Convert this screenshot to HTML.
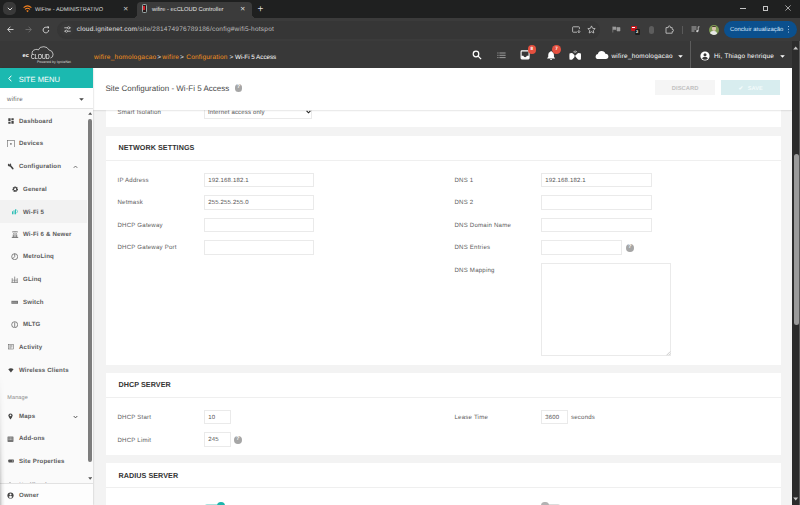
<!DOCTYPE html>
<html><head><meta charset="utf-8"><title>wifire - ecCLOUD Controller</title>
<style>
*{box-sizing:border-box;margin:0;padding:0}
html,body{width:800px;height:505px;overflow:hidden;background:#f4f4f4;font-family:"Liberation Sans",sans-serif;letter-spacing:0.01px;text-rendering:geometricPrecision}
.a{position:absolute;white-space:nowrap}
#tabs{left:0;top:0;width:800px;height:18px;background:#1f2020}
#tool{left:0;top:18px;width:800px;height:23px;background:#3b3b3b}
#apph{left:0;top:41px;width:792px;height:27px;background:#383838}
#sb{left:792px;top:41px;width:8px;height:464px;background:#2c2c2c}
#sbt{left:793.5px;top:154px;width:5px;height:171px;background:#9b9b9b;border-radius:2.5px}
.t{font-size:5.6px;color:#d8d8d8;line-height:8px}
.card{background:#fff}
.lbl{font-size:6.1px;letter-spacing:0.2px;color:#5e5e5e;line-height:8px}
.inp{background:#fff;border:1px solid #eaeaea;height:14.6px;font-size:6px;letter-spacing:0.17px;color:#555;line-height:12.8px;padding-left:2.9px;padding-top:1.1px}
.hd{font-size:7.2px;font-weight:bold;color:#333;line-height:10px;letter-spacing:0.05px}
.mi{font-size:6.1px;letter-spacing:0.17px;font-weight:bold;color:#5a5a5a;line-height:8px;left:19px}
.mi2{left:23px}
.bc{top:53.9px;font-size:6.5px;line-height:8px;color:#f7931e}
.hl{left:105.5px;width:675px;height:0.8px;background:#efefef}
</style></head><body>
<!-- browser chrome -->
<div class="a" id="tabs"></div>
<div class="a" style="left:2.6px;top:2px;width:13px;height:13px;border-radius:5px;background:#393939"></div>
<svg class="a" style="left:6.5px;top:7px" width="6" height="4" viewBox="0 0 6 4"><path d="M0.8 0.8 L3 3 L5.2 0.8" fill="none" stroke="#e0e0e0" stroke-width="1"/></svg>
<svg class="a" style="left:22.5px;top:4.5px" width="9" height="8" viewBox="0 0 9 8"><path d="M0.6 2.6 Q4.5 -0.8 8.4 2.6" fill="none" stroke="#f58220" stroke-width="1.1"/><path d="M2 4.3 Q4.5 2.2 7 4.3" fill="none" stroke="#f58220" stroke-width="1.1"/><path d="M3.2 5.8 L4.5 7.3 L5.8 5.8 Q4.5 4.9 3.2 5.8Z" fill="#f58220"/></svg>
<div class="a t" style="left:35px;top:6.1px">WiFire - ADMINISTRATIVO</div>
<div class="a t" style="left:122.9px;top:5.8px;font-size:6.5px;color:#ccc">✕</div>
<div class="a" style="left:137px;top:2px;width:114.5px;height:17px;background:#3b3b3b;border-radius:4px 4px 0 0"></div>
<div class="a" style="left:133px;top:14px;width:4px;height:4px;background:radial-gradient(circle at 0 0,rgba(59,59,59,0) 3.8px,#3b3b3b 4.2px)"></div><div class="a" style="left:251.5px;top:14px;width:4px;height:4px;background:radial-gradient(circle at 100% 0,rgba(59,59,59,0) 3.8px,#3b3b3b 4.2px)"></div>
<div class="a" style="left:141.5px;top:4.2px;width:5.6px;height:8.6px;border:0.8px solid #9aa;border-radius:1.3px;background:#2a1a1a"></div>
<div class="a" style="left:143.1px;top:5.8px;width:2.4px;height:4.6px;background:#d0202a"></div>
<div class="a t" style="left:152px;top:6.1px;color:#e6e6e6;font-size:5.75px">wifire - ecCLOUD Controller</div>
<div class="a t" style="left:240px;top:5.8px;font-size:6.5px;color:#ddd">✕</div>
<div class="a t" style="left:257.4px;top:4.4px;font-size:10px;color:#ddd;line-height:12px">+</div>
<div class="a" style="left:740.2px;top:8.2px;width:5.5px;height:0.7px;background:#c4c4c4"></div>
<div class="a" style="left:762.6px;top:5.8px;width:5.4px;height:5.4px;border:0.7px solid #c4c4c4"></div>
<svg class="a" style="left:784.5px;top:5.3px" width="6" height="6" viewBox="0 0 6 6"><path d="M0.4 0.4 L5.6 5.6 M5.6 0.4 L0.4 5.6" stroke="#d0d0d0" stroke-width="0.75"/></svg>

<div class="a" id="tool"></div>
<svg class="a" style="left:6.5px;top:26px" width="7" height="7" viewBox="0 0 7 7"><path d="M6.5 3.5 H0.8 M3.4 0.7 L0.7 3.5 L3.4 6.3" fill="none" stroke="#ddd" stroke-width="0.9"/></svg>
<svg class="a" style="left:24.5px;top:26px" width="7" height="7" viewBox="0 0 7 7"><path d="M0.5 3.5 H6.2 M3.6 0.7 L6.3 3.5 L3.6 6.3" fill="none" stroke="#6e6e6e" stroke-width="0.9"/></svg>
<svg class="a" style="left:42px;top:25.5px" width="8" height="8" viewBox="0 0 8 8"><path d="M6.7 4 A2.8 2.8 0 1 1 5.6 1.8" fill="none" stroke="#ddd" stroke-width="0.9"/><path d="M4.6 0.4 H7 V2.8 Z" fill="#ddd"/></svg>
<div class="a" style="left:57px;top:21px;width:543px;height:17.5px;border-radius:9px;background:#363636"></div>
<div class="a" style="left:60px;top:22.8px;width:13.5px;height:13.5px;border-radius:7px;background:#393939"></div>
<svg class="a" style="left:63.5px;top:26.3px" width="7" height="7" viewBox="0 0 7 7"><path d="M0.3 1.8 H6.7 M0.3 5.2 H6.7" stroke="#ddd" stroke-width="0.8"/><circle cx="4.6" cy="1.8" r="1.1" fill="#353535" stroke="#ddd" stroke-width="0.7"/><circle cx="2.4" cy="5.2" r="1.1" fill="#353535" stroke="#ddd" stroke-width="0.7"/></svg>
<div class="a t" style="left:76.8px;top:26px;font-size:6.5px;letter-spacing:0.23px;color:#bcbcbc"><span style="color:#e6e6e6">cloud.ignitenet.com</span>/site/281474976789186/config#wifi5-hotspot</div>
<!-- right toolbar icons -->
<svg class="a" style="left:571.5px;top:25.5px" width="9" height="8" viewBox="0 0 9 8"><path d="M5 6.2 H1.2 Q0.6 6.2 0.6 5.6 V1.4 Q0.6 0.8 1.2 0.8 H6.8 Q7.4 0.8 7.4 1.4 V3" fill="none" stroke="#cfcfcf" stroke-width="0.8"/><path d="M6.9 3.8 V6.6 M5.6 5.4 L6.9 6.7 L8.2 5.4" fill="none" stroke="#cfcfcf" stroke-width="0.8"/></svg>
<svg class="a" style="left:587px;top:25.3px" width="9" height="9" viewBox="0 0 9 9"><path d="M4.5 0.9 L5.6 3.3 L8.2 3.6 L6.3 5.4 L6.8 8 L4.5 6.7 L2.2 8 L2.7 5.4 L0.8 3.6 L3.4 3.3 Z" fill="none" stroke="#cfcfcf" stroke-width="0.8"/></svg>
<svg class="a" style="left:612px;top:26px" width="9" height="7" viewBox="0 0 9 7"><path d="M0.8 0.5 V6.5 M0.8 1 H4 V3.6 H0.8 M5 1.5 H8 V5 H5 Z" fill="#9a9a9a" stroke="#9a9a9a" stroke-width="0.6"/></svg>
<div class="a" style="left:630.5px;top:25.6px;width:6px;height:5px;background:#c4161c;border-radius:1px"></div>
<div class="a" style="left:632px;top:27px;width:3px;height:1px;background:#fff"></div>
<div class="a" style="left:634.5px;top:29.3px;width:5.4px;height:5.4px;background:#1d1d1d;border-radius:1.2px;color:#fff;font-size:4px;line-height:5.4px;text-align:center;font-weight:bold">2</div>
<div class="a" style="left:648.5px;top:25.5px;width:5px;height:8px;border-radius:2.5px;background:#5d5d5d"></div>
<svg class="a" style="left:665px;top:25px" width="9" height="9" viewBox="0 0 9 9"><path d="M1 2.6 H3.2 Q3 0.9 4.3 0.9 Q5.6 0.9 5.4 2.6 H7.2 V4.4 Q8.6 4.2 8.6 5.4 Q8.6 6.6 7.2 6.4 V8.2 H1 Z" fill="none" stroke="#cfcfcf" stroke-width="0.8"/></svg>
<div class="a" style="left:682px;top:25.5px;width:0.7px;height:8.5px;background:#5a5a5a"></div>
<svg class="a" style="left:690.5px;top:26px" width="9" height="7" viewBox="0 0 9 7"><path d="M0.5 1 H5.5 M0.5 3 H5.5 M0.5 5 H3.5" stroke="#cfcfcf" stroke-width="0.8"/><path d="M7.2 0.8 V5 M7.2 0.8 H8.6" stroke="#cfcfcf" stroke-width="0.8" fill="none"/><circle cx="6.3" cy="5.2" r="1.1" fill="#cfcfcf"/></svg>
<div class="a" style="left:708.7px;top:24.7px;width:10.2px;height:10.2px;border-radius:5.1px;overflow:hidden;background:#7c9a52"><div class="a" style="left:3.1px;top:1.6px;width:4px;height:4.6px;border-radius:2px;background:#d8c3ae"></div><div class="a" style="left:3.1px;top:1.2px;width:4px;height:1.6px;border-radius:2px 2px 0 0;background:#4a3a30"></div><div class="a" style="left:1.6px;top:6.4px;width:7px;height:5px;border-radius:3px 3px 0 0;background:#e8e8e8"></div></div>
<div class="a" style="left:724.4px;top:21.2px;width:72.5px;height:17px;border-radius:8.5px;background:#0b508e"></div>
<div class="a t" style="left:730px;top:25.8px;font-size:5.9px;color:#d3e6fc">Concluir atualização</div>
<div class="a" style="left:787.7px;top:25.8px;width:1.4px;height:1.4px;background:#d3e6fc;border-radius:1px;box-shadow:0 2.8px 0 #d3e6fc,0 5.6px 0 #d3e6fc"></div>

<!-- app header -->
<div class="a" id="apph"></div>
<svg class="a" style="left:20px;top:41px" width="40" height="22" viewBox="0 0 40 22"><path d="M12.2 13.2 Q11.6 9.2 15.6 8.5 Q17.2 8 18.3 9 Q19.4 5.4 23.9 5.7 Q27.6 5.9 28.8 8.8 Q32.6 9.6 33.1 13.1 Q33.3 16.4 30.4 17.1" fill="none" stroke="#f4f4f4" stroke-width="0.7"/></svg>
<div class="a" style="left:22.4px;top:52.4px;font-size:5.6px;letter-spacing:0.35px;line-height:8px;font-weight:bold;color:#fff">ec</div>
<div class="a" style="left:30.9px;top:52.2px;font-size:7.3px;line-height:9px;color:#fff;transform:scaleX(0.73);transform-origin:0 0">CLOUD</div>
<div class="a" style="left:36.9px;top:59.5px;font-size:3.55px;line-height:5px;color:#d8d8d8">Powered by IgniteNet</div>
<div class="a bc" style="left:94px;letter-spacing:0.26px">wifire_homologacao</div>
<div class="a bc" style="left:157.3px;color:#e8e8e8">&gt;</div>
<div class="a bc" style="left:162.3px;letter-spacing:0.3px">wifire</div>
<div class="a bc" style="left:180px;color:#e8e8e8">&gt;</div>
<div class="a bc" style="left:186.3px;letter-spacing:0.2px">Configuration</div>
<div class="a bc" style="left:229.5px;color:#e8e8e8">&gt;</div>
<div class="a bc" style="left:235px;color:#fff;font-size:6.3px;letter-spacing:-0.03px">Wi-Fi 5 Access</div>
<!-- header right icons -->
<svg class="a" style="left:472px;top:50.3px" width="10" height="10" viewBox="0 0 9 9"><circle cx="3.6" cy="3.6" r="2.5" fill="none" stroke="#fff" stroke-width="1.1"/><path d="M5.5 5.5 L8.2 8.2" stroke="#fff" stroke-width="1.2"/></svg>
<svg class="a" style="left:497px;top:51.5px" width="9" height="7" viewBox="0 0 9 7"><path d="M0.3 1 H1.5 M0.3 3.3 H1.5 M0.3 5.6 H1.5" stroke="#9c9c9c" stroke-width="1"/><path d="M2.4 1 H8.6 M2.4 3.3 H8.6 M2.4 5.6 H8.6" stroke="#9c9c9c" stroke-width="1"/></svg>
<svg class="a" style="left:520.4px;top:50.2px" width="10.4" height="10" viewBox="0 0 10 10"><rect x="0.9" y="0.9" width="8" height="8" rx="0.8" fill="none" stroke="#fff" stroke-width="1.1"/><path d="M1 5.8 H3.2 Q3.4 7.2 4.9 7.2 Q6.4 7.2 6.6 5.8 H8.8 V8.8 H1 Z" fill="#fff"/></svg>
<div class="a" style="left:527.5px;top:45px;width:8.8px;height:8.8px;border-radius:4.4px;background:#e5503f;color:#fff;font-size:4.6px;line-height:8.8px;text-align:center;font-weight:bold">8</div>
<svg class="a" style="left:545.6px;top:50px" width="10.2" height="10.4" viewBox="0 0 10 10"><path d="M5 0.8 Q5.7 0.8 5.7 1.5 Q7.8 2.1 7.8 4.6 V6.8 L8.8 7.8 V8.2 H1.2 V7.8 L2.2 6.8 V4.6 Q2.2 2.1 4.3 1.5 Q4.3 0.8 5 0.8 Z" fill="#fff"/><path d="M4 8.7 H6 Q6 9.7 5 9.7 Q4 9.7 4 8.7Z" fill="#fff"/></svg>
<div class="a" style="left:552.1px;top:45px;width:8.8px;height:8.8px;border-radius:4.4px;background:#e5503f;color:#fff;font-size:4.6px;line-height:8.8px;text-align:center;font-weight:bold">7</div>
<svg class="a" style="left:569.2px;top:49.6px" width="12.4" height="10.6" viewBox="0 0 12.4 10.6"><path d="M4.4 1.8 Q6.2 0.2 8 1.8" fill="none" stroke="#ddd" stroke-width="0.7"/><path d="M5.2 2.8 Q6.2 2 7.2 2.8" fill="none" stroke="#ddd" stroke-width="0.6"/><path d="M0.5 3.6 Q0.2 6.5 0.5 9.6 Q2.5 10 3.6 9.2 L5.4 7.2 V5 L3.6 3.2 Q2 2.8 0.5 3.6Z M11.9 3.6 Q12.2 6.5 11.9 9.6 Q9.9 10 8.8 9.2 L7 7.2 V5 L8.8 3.2 Q10.4 2.8 11.9 3.6Z" fill="#fff"/><rect x="5.4" y="5.2" width="1.6" height="1.6" fill="#bbb"/></svg>
<svg class="a" style="left:594.5px;top:50.2px" width="14" height="10" viewBox="0 0 14 10"><path d="M3.4 9 Q0.6 9 0.6 6.4 Q0.6 4.2 2.9 4 Q3.4 1 6.6 1 Q9.6 1 10.4 3.8 Q13.4 4 13.4 6.6 Q13.4 9 10.8 9 Z" fill="#fff"/></svg>
<div class="a" style="left:611.5px;top:52.8px;font-size:6.4px;letter-spacing:0.25px;line-height:8px;color:#fff">wifire_homologacao</div>
<svg class="a" style="left:677.5px;top:55.3px" width="5" height="3" viewBox="0 0 5 3"><path d="M0.2 0.2 H4.8 L2.5 2.8 Z" fill="#fff"/></svg>
<div class="a" style="left:689.6px;top:41px;width:0.8px;height:27px;background:#5c5c5c"></div>
<svg class="a" style="left:699.5px;top:50.5px" width="10" height="10" viewBox="0 0 10 10"><circle cx="5" cy="5" r="4.6" fill="#fff"/><circle cx="5" cy="3.7" r="1.5" fill="#383838"/><path d="M2.1 7.4 Q2.4 5.8 5 5.8 Q7.6 5.8 7.9 7.4 Q6.8 8.8 5 8.8 Q3.2 8.8 2.1 7.4Z" fill="#383838"/></svg>
<div class="a" style="left:714px;top:52.8px;font-size:6.4px;letter-spacing:0.23px;line-height:8px;color:#fff">Hi, Thiago henrique</div>
<svg class="a" style="left:779.5px;top:55.3px" width="5" height="3" viewBox="0 0 5 3"><path d="M0.2 0.2 H4.8 L2.5 2.8 Z" fill="#fff"/></svg>

<!-- page scrollbar -->
<div class="a" id="sb"></div><div class="a" style="left:799.2px;top:41px;width:0.8px;height:464px;background:#5a5a5a"></div><div class="a" id="sbt"></div>
<svg class="a" style="left:793.3px;top:45.5px" width="5.4" height="4" viewBox="0 0 5.4 4"><path d="M0.2 3.6 L2.7 0.4 L5.2 3.6Z" fill="#c8c8c8"/></svg>
<svg class="a" style="left:793.3px;top:497px" width="5.4" height="4" viewBox="0 0 5.4 4"><path d="M0.2 0.4 L2.7 3.6 L5.2 0.4Z" fill="#c8c8c8"/></svg>

<!-- content -->
<div class="a" style="left:93px;top:68px;width:699px;height:437px;background:#f3f3f3"></div>
<!-- card1 -->
<div class="a card" style="left:105.5px;top:100px;width:675px;height:26.6px"></div>
<div class="a lbl" style="left:117.5px;top:109.2px">Smart Isolation</div>
<div class="a inp" style="left:204.3px;top:104.7px;width:108px;padding-left:2.6px;line-height:13.4px">Internet access only</div>
<svg class="a" style="left:305.5px;top:110.3px" width="5" height="4" viewBox="0 0 5 4"><path d="M0.6 0.8 L2.5 2.8 L4.4 0.8" fill="none" stroke="#222" stroke-width="1.1"/></svg>
<!-- content header -->
<div class="a" style="left:93px;top:68px;width:699px;height:41.6px;background:#fff;box-shadow:0 0.5px 1.2px rgba(0,0,0,0.10)"></div>
<div class="a" style="left:105.4px;top:82.6px;font-size:8px;line-height:11px;color:#4a4a4a">Site Configuration - Wi-Fi 5 Access</div>
<div class="a" style="left:234.7px;top:84.1px;width:7.8px;height:7.8px;border-radius:50%;background:#a6a6a6;color:#fff;font-size:5.6px;font-weight:bold;line-height:7.8px;text-align:center">?</div>
<div class="a" style="left:655.2px;top:80.1px;width:59.8px;height:15.4px;background:#f5f5f5;color:#c2c2c2;font-size:5.8px;font-weight:bold;line-height:15.4px;padding-top:2.4px;text-align:center">DISCARD</div>
<div class="a" style="left:721.1px;top:80.1px;width:59px;height:15.4px;background:#d8edef;color:#f4fbfb;font-size:5.6px;font-weight:bold;line-height:15.4px;padding-top:2.4px;text-align:center">✔&nbsp;&nbsp;&nbsp;SAVE</div>

<!-- card2 -->
<div class="a card" style="left:105.5px;top:135.5px;width:675px;height:229px"></div>
<div class="a hd" style="left:118.5px;top:143.3px">NETWORK SETTINGS</div>
<div class="a hl" style="top:159.8px"></div>
<div class="a lbl" style="left:117.5px;top:176.9px">IP Address</div>
<div class="a lbl" style="left:117.5px;top:199.4px">Netmask</div>
<div class="a lbl" style="left:117.5px;top:221.9px">DHCP Gateway</div>
<div class="a lbl" style="left:117.5px;top:244.4px">DHCP Gateway Port</div>
<div class="a inp" style="left:204.3px;top:172.7px;width:110px">192.168.182.1</div>
<div class="a inp" style="left:204.3px;top:195.2px;width:110px">255.255.255.0</div>
<div class="a inp" style="left:204.3px;top:217.7px;width:110px"></div>
<div class="a inp" style="left:204.3px;top:240.2px;width:110px"></div>
<div class="a lbl" style="left:454.5px;top:176.9px">DNS 1</div>
<div class="a lbl" style="left:454.5px;top:199.4px">DNS 2</div>
<div class="a lbl" style="left:454.5px;top:221.9px">DNS Domain Name</div>
<div class="a lbl" style="left:454.5px;top:244.4px">DNS Entries</div>
<div class="a lbl" style="left:454.5px;top:266.9px">DNS Mapping</div>
<div class="a inp" style="left:541.3px;top:172.7px;width:110.3px">192.168.182.1</div>
<div class="a inp" style="left:541.3px;top:195.2px;width:110.3px"></div>
<div class="a inp" style="left:541.3px;top:217.7px;width:110.3px"></div>
<div class="a inp" style="left:541.3px;top:240.2px;width:80.3px"></div>
<div class="a" style="left:625.9px;top:244.3px;width:7.8px;height:7.8px;border-radius:50%;background:#a6a6a6;color:#fff;font-size:5.6px;font-weight:bold;line-height:7.8px;text-align:center">?</div>
<div class="a inp" style="left:541.3px;top:262.7px;width:130.2px;height:93.6px"></div>
<svg class="a" style="left:666px;top:351px" width="4.5" height="4.5" viewBox="0 0 4.5 4.5"><path d="M4.2 0.6 L0.6 4.2 M4.2 2.6 L2.6 4.2" stroke="#999" stroke-width="0.5"/></svg>

<!-- card3 -->
<div class="a card" style="left:105.5px;top:372.7px;width:675px;height:82px"></div>
<div class="a hd" style="left:118.5px;top:380px">DHCP SERVER</div>
<div class="a hl" style="top:396.6px"></div>
<div class="a lbl" style="left:117.5px;top:414.1px">DHCP Start</div>
<div class="a lbl" style="left:117.5px;top:436.7px">DHCP Limit</div>
<div class="a inp" style="left:204.3px;top:409.7px;width:26.4px">10</div>
<div class="a inp" style="left:204.3px;top:432.3px;width:26.4px">245</div>
<div class="a" style="left:233.8px;top:436.1px;width:7.8px;height:7.8px;border-radius:50%;background:#a6a6a6;color:#fff;font-size:5.6px;font-weight:bold;line-height:7.8px;text-align:center">?</div>
<div class="a lbl" style="left:454.5px;top:414.1px">Lease Time</div>
<div class="a inp" style="left:541.3px;top:409.7px;width:26.4px">3600</div>
<div class="a lbl" style="left:571px;top:414.1px">seconds</div>

<!-- card4 -->
<div class="a card" style="left:105.5px;top:462.7px;width:675px;height:50px"></div>
<div class="a hd" style="left:118.5px;top:471.1px">RADIUS SERVER</div>
<div class="a hl" style="top:486.6px"></div>
<div class="a" style="left:205px;top:503.8px;width:14px;height:4px;border-radius:2px;background:#a9e3df"></div>
<div class="a" style="left:216.5px;top:501.5px;width:8px;height:8px;border-radius:4px;background:#1cb5ac"></div>
<div class="a" style="left:546px;top:504px;width:14px;height:4px;border-radius:2px;background:#dcdcdc"></div>
<div class="a" style="left:541.4px;top:501.5px;width:7.6px;height:7.6px;border-radius:4px;background:#b2b2b2"></div>

<!-- sidebar -->
<div class="a" style="left:0;top:68px;width:93.3px;height:437px;background:#fafafa;box-shadow:0.6px 0 1.6px rgba(0,0,0,0.16)"></div>
<div class="a" style="left:0;top:68px;width:93.3px;height:20.3px;background:#1bb9b0"></div>
<svg class="a" style="left:8.3px;top:75px" width="4" height="7" viewBox="0 0 4 7"><path d="M3.4 0.7 L0.8 3.5 L3.4 6.3" fill="none" stroke="#fff" stroke-width="1"/></svg>
<div class="a" style="left:18.7px;top:73.6px;font-size:7.57px;line-height:11px;color:#fff">SITE MENU</div>
<div class="a" style="left:0;top:88.3px;width:93.3px;height:21px;background:#fff;border-bottom:0.7px solid #e4e4e4"></div>
<div class="a" style="left:7px;top:96.2px;font-size:6.1px;letter-spacing:0.3px;line-height:8px;color:#666">wifire</div>
<svg class="a" style="left:79.3px;top:98px" width="5" height="3" viewBox="0 0 5 3"><path d="M0.2 0.2 H4.8 L2.5 2.8 Z" fill="#444"/></svg>
<!-- sidebar scrollbar -->
<svg class="a" style="left:87.8px;top:112.4px" width="4.4" height="3" viewBox="0 0 4.4 3"><path d="M0.2 2.8 L2.2 0.3 L4.2 2.8Z" fill="#555"/></svg>
<div class="a" style="left:88.2px;top:118.6px;width:3.8px;height:343.4px;border-radius:1.9px;background:#7d7d7d"></div>
<svg class="a" style="left:87.8px;top:477.4px" width="4.4" height="3" viewBox="0 0 4.4 3"><path d="M0.2 0.2 L2.2 2.7 L4.2 0.2Z" fill="#555"/></svg>
<!-- active item -->
<div class="a" style="left:0;top:199.8px;width:87.4px;height:22.8px;background:#f2f2f2"></div>
<!-- items -->
<div class="a mi" style="top:117.7px">Dashboard</div>
<div class="a mi" style="top:140.3px">Devices</div>
<div class="a mi" style="top:162.9px">Configuration</div>
<div class="a mi mi2" style="top:185.5px">General</div>
<div class="a mi mi2" style="top:208.7px">Wi-Fi 5</div>
<div class="a mi mi2" style="top:230.7px">Wi-Fi 6 &amp; Newer</div>
<div class="a mi mi2" style="top:253.3px">MetroLinq</div>
<div class="a mi mi2" style="top:275.9px">GLinq</div>
<div class="a mi mi2" style="top:298.5px">Switch</div>
<div class="a mi mi2" style="top:321.1px">MLTG</div>
<div class="a mi" style="top:343.7px">Activity</div>
<div class="a mi" style="top:366.9px">Wireless Clients</div>
<div class="a" style="left:7.2px;top:394.9px;font-size:5.5px;letter-spacing:0.15px;line-height:7px;color:#8a8a8a">Manage</div>
<div class="a mi" style="top:412.6px">Maps</div>
<div class="a mi" style="top:435.2px">Add-ons</div>
<div class="a mi" style="top:457.8px">Site Properties</div>
<div class="a mi" style="top:482.2px">Notifications</div>
<!-- icons -->
<svg class="a" style="left:8px;top:118.2px" width="6" height="6" viewBox="0 0 6 6"><path d="M0.3 0.3 H2.6 V3.3 H0.3Z M3.4 0.3 H5.7 V2 H3.4Z M0.3 4.1 H2.6 V5.7 H0.3Z M3.4 2.8 H5.7 V5.7 H3.4Z" fill="#444"/></svg>
<svg class="a" style="left:6.8px;top:139.7px" width="7.8" height="7.8" viewBox="0 0 7.8 7.8"><rect x="0.5" y="0.5" width="6.8" height="6.8" fill="none" stroke="#666" stroke-width="0.6"/><rect x="3.2" y="3.2" width="1.4" height="1.4" fill="#555"/></svg>
<svg class="a" style="left:7px;top:163px" width="7" height="7" viewBox="0 0 7 7"><path d="M0.9 2.4 Q0.4 0.8 2 0.4 L2.3 1.5 L3.2 1.3 L3 0.3 Q4.6 0.6 4.2 2.4 L6.6 5.2 Q6.7 6.4 5.5 6.4 L3 3.4 Q1.6 3.8 0.9 2.4Z" fill="#444"/></svg>
<svg class="a" style="left:73px;top:164.8px" width="5" height="4" viewBox="0 0 5 4"><path d="M0.7 2.9 L2.5 1 L4.3 2.9" fill="none" stroke="#555" stroke-width="0.8"/></svg>
<svg class="a" style="left:11.6px;top:185.8px" width="6.4" height="6.4" viewBox="0 0 6.4 6.4"><circle cx="3.2" cy="3.2" r="2" fill="none" stroke="#444" stroke-width="1.6" stroke-dasharray="1.1 0.47"/><circle cx="3.2" cy="3.2" r="1.7" fill="none" stroke="#444" stroke-width="1"/></svg>
<svg class="a" style="left:10.6px;top:208.3px" width="8" height="7" viewBox="0 0 8 7"><path d="M1.5 6.3 V3.3 M3 6.3 V2.3 M4.5 6.3 V1.3" stroke="#1bb9b0" stroke-width="0.9"/><path d="M5.6 1.6 Q7.4 3.4 5.6 5.2" fill="none" stroke="#1bb9b0" stroke-width="0.6"/></svg>
<svg class="a" style="left:10.6px;top:230.9px" width="8" height="7" viewBox="0 0 8 7"><path d="M1 1 Q4 -0.4 7 1 M2 2.4 Q4 1.5 6 2.4" fill="none" stroke="#555" stroke-width="0.6"/><path d="M2.3 6.3 V3.4 M4 6.3 V3.1 M5.7 6.3 V3.4 M0.8 6.4 H7.2" stroke="#555" stroke-width="0.8"/></svg>
<svg class="a" style="left:11.0px;top:253px" width="7.4" height="7.4" viewBox="0 0 7.4 7.4"><circle cx="3.7" cy="3.7" r="3" fill="none" stroke="#555" stroke-width="0.7"/><path d="M3.7 0.7 V3.7 L1.6 5.8" fill="none" stroke="#555" stroke-width="0.7"/></svg>
<svg class="a" style="left:11.0px;top:275.9px" width="7.4" height="7" viewBox="0 0 7.4 7"><path d="M1.2 6.4 V2.2 M3.7 6.4 V0.6 M6.2 6.4 V2.2 M0.4 6.4 H7" stroke="#666" stroke-width="0.7"/><path d="M1.2 4.2 H6.2" stroke="#666" stroke-width="0.5"/></svg>
<svg class="a" style="left:11.0px;top:299.6px" width="7.4" height="5" viewBox="0 0 7.4 5"><rect x="0.4" y="0.8" width="6.6" height="3" fill="#777"/><path d="M1.5 2.3 H6" stroke="#fff" stroke-width="0.5" stroke-dasharray="0.6 0.5"/></svg>
<svg class="a" style="left:11.0px;top:320.8px" width="7.4" height="7.4" viewBox="0 0 7.4 7.4"><circle cx="3.7" cy="3.7" r="3" fill="none" stroke="#555" stroke-width="0.7"/><path d="M3.7 1.4 V6" stroke="#555" stroke-width="0.7"/></svg>
<svg class="a" style="left:8px;top:344.3px" width="5.8" height="5.4" viewBox="0 0 7 6.4"><rect x="0.4" y="0.4" width="6.2" height="5.6" fill="none" stroke="#555" stroke-width="0.6"/><path d="M1.6 2 H5.4 M1.6 3.4 H5.4 M1.6 4.7 H4" stroke="#555" stroke-width="0.6"/></svg>
<svg class="a" style="left:8px;top:367.8px" width="5.8" height="5" viewBox="0 0 7.4 6"><path d="M0.3 1.4 Q3.7 -0.9 7.1 1.4 L3.7 5.6 Z" fill="#444"/></svg>
<svg class="a" style="left:8px;top:412.6px" width="5" height="7" viewBox="0 0 5 7"><path d="M2.5 0.4 Q4.6 0.4 4.6 2.5 Q4.6 3.9 2.5 6.5 Q0.4 3.9 0.4 2.5 Q0.4 0.4 2.5 0.4Z" fill="#444"/><circle cx="2.5" cy="2.4" r="0.8" fill="#f9f9f9"/></svg>
<svg class="a" style="left:72.5px;top:414.6px" width="5" height="4" viewBox="0 0 5 4"><path d="M0.7 1 L2.5 2.9 L4.3 1" fill="none" stroke="#444" stroke-width="0.9"/></svg>
<svg class="a" style="left:7px;top:435.6px" width="7" height="6.4" viewBox="0 0 7 6.4"><rect x="0.5" y="0.5" width="6" height="5.4" rx="0.6" fill="#777"/><path d="M1.6 2 H5.4 M1.6 3.4 H5.4" stroke="#f9f9f9" stroke-width="0.6" stroke-dasharray="0.9 0.5"/></svg>
<svg class="a" style="left:8px;top:459.4px" width="6.4" height="4" viewBox="0 0 7 4.4"><rect x="0.3" y="0.6" width="6.4" height="3.2" rx="0.9" fill="#555"/><rect x="4.6" y="1.4" width="1.4" height="1.6" fill="#aaa"/></svg>
<svg class="a" style="left:7.4px;top:482.4px" width="6" height="7" viewBox="0 0 6 7"><path d="M3 0.5 Q5 0.8 5 3.4 V4.8 L5.8 5.6 H0.2 L1 4.8 V3.4 Q1 0.8 3 0.5Z" fill="#444"/></svg>
<!-- owner row -->
<div class="a" style="left:0;top:483.3px;width:93.3px;height:22px;background:#fdfdfd;border-top:0.7px solid #e2e2e2"></div>
<svg class="a" style="left:7px;top:491.6px" width="7" height="7" viewBox="0 0 7 7"><circle cx="3.5" cy="3.5" r="3.1" fill="#444"/><circle cx="3.5" cy="2.6" r="1" fill="#fff"/><path d="M1.6 5 Q1.9 4 3.5 4 Q5.1 4 5.4 5 Q4.6 5.9 3.5 5.9 Q2.4 5.9 1.6 5Z" fill="#fff"/></svg>
<div class="a mi" style="top:491.8px">Owner</div>
<div class="a" style="left:0;top:375px;width:5px;height:130px;background:linear-gradient(to right,rgba(0,0,0,0.24),rgba(0,0,0,0.07) 45%,rgba(0,0,0,0));-webkit-mask-image:linear-gradient(to bottom,transparent,rgba(0,0,0,0.35) 45%,#000);mask-image:linear-gradient(to bottom,transparent,rgba(0,0,0,0.35) 45%,#000)"></div>
</body></html>
